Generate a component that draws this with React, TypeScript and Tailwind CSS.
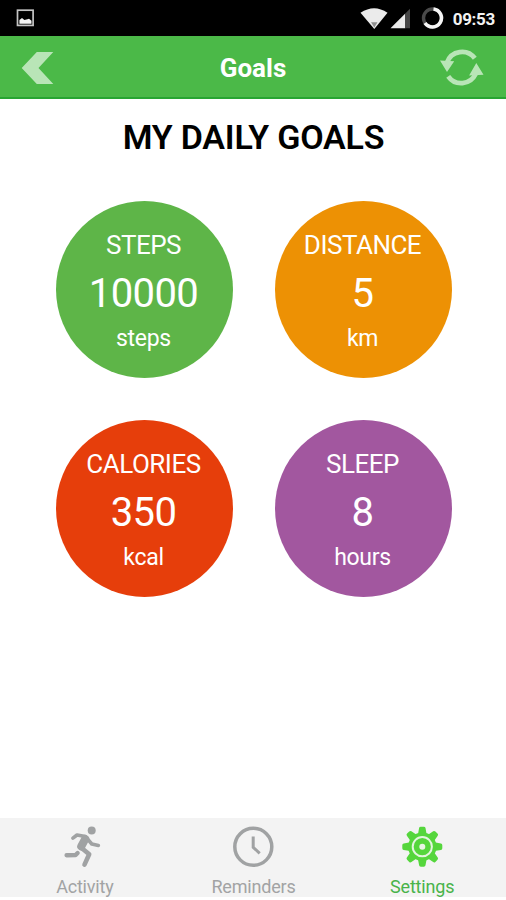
const goals = [
  { title: 'STEPS', value: '10000', unit: 'steps', color: 'bg-[#5eb548]' },
  { title: 'DISTANCE', value: '5', unit: 'km', color: 'bg-[#ed9104]' },
  { title: 'CALORIES', value: '350', unit: 'kcal', color: 'bg-[#e63e0b]' },
  { title: 'SLEEP', value: '8', unit: 'hours', color: 'bg-[#a2579f]' },
];

function StatusBar() {
  return (
    <div className="flex h-9 shrink-0 items-center justify-between bg-black pr-[11px] pl-4">
      <svg width="19" height="18" viewBox="0 0 19 18">
        <rect x="1.5" y="1.2" width="15.6" height="15.2" fill="none" stroke="#c4c4c4" strokeWidth="1.7" />
        <path d="M3.4 14.8V11l2.6-2 2.4 2 3-.8L13 9.8l2.5 2v3z" fill="#f5f5f5" />
      </svg>
      <div className="flex items-center">
        <svg width="92" height="26" viewBox="0 0 92 26" className="mr-[3px]">
          <path d="M2.5 7.7Q16.2-1.3 29.5 7.7L16.3 24z" fill="#ebebeb" />
          <path d="M13 17.2h6.5l-3.2 5.3z" fill="#8f8f8f" />
          <path d="M32.5 23.3 47.3 8.5v14.8z" fill="#ebebeb" />
          <path d="M47.3 8.5 52 3.8v19.5h-4.7z" fill="#464646" />
          <circle cx="74.5" cy="13" r="9" fill="none" stroke="#4a4a4a" strokeWidth="3.4" />
          <path d="M75.5 4A9 9 0 1 1 67 18" fill="none" stroke="#f5f5f5" strokeWidth="3.6" />
        </svg>
        <span className="pt-0.5 text-[17px] leading-6 font-bold tracking-[-0.3px] text-[#f2f2f2]">09:53</span>
      </div>
    </div>
  );
}

function Header() {
  return (
    <header className="grid h-[63px] shrink-0 grid-cols-3 items-center border-b-2 border-[#28a532] bg-[#4bb948] pr-[21px] pl-[21px]">
      <svg width="34" height="34" viewBox="0 0 34 34" className="mt-1">
        <path d="M15.8.1h16.5L17.5 16l14.8 16H15.8L.7 16z" fill="#b9e5b7" />
      </svg>
      <h1 className="pt-[3px] text-center text-[26px] leading-8 font-bold text-white">Goals</h1>
      <svg width="46" height="38" viewBox="0 0 46 38" className="mt-0.5 justify-self-end">
        <g fill="none" stroke="#b9e5b7" strokeWidth="4.8">
          <path d="M8 13.5A15.9 15.9 0 0 1 35.8 9.3" />
          <path d="M36.6 25A15.9 15.9 0 0 1 9.2 27.3" />
        </g>
        <path d="M1 11.5 15.2 12.2 8 22.9zM30.1 26.6 44.5 25.8 37.3 14z" fill="#b9e5b7" />
      </svg>
    </header>
  );
}

function RunnerIcon() {
  return (
    <svg width="40" height="42" viewBox="0 0 40 42">
      <circle cx="27.7" cy="4.6" r="4" fill="#a0a2a3" />
      <g fill="none" stroke="#a0a2a3" strokeLinecap="round" strokeLinejoin="round">
        <path d="M8.9 12.2 13 9 21.5 10.6 27.8 18 34.4 19.4" strokeWidth="3.6" />
        <path d="M21.2 13 17.2 20.5" strokeWidth="8" />
        <path d="M17 21.5 25.2 28.3 20.5 38.6" strokeWidth="4.6" />
        <path d="M13.6 27 11.6 29 2.6 29.2" strokeWidth="4.4" />
      </g>
    </svg>
  );
}

function ClockIcon() {
  return (
    <svg width="42" height="42" viewBox="0 0 42 42" fill="none" stroke="#a0a2a3">
      <circle cx="21.3" cy="20.8" r="18.5" strokeWidth="3.5" />
      <path d="M21.2 10.6v10.7l6.5 6" strokeWidth="3" />
    </svg>
  );
}

function GearIcon() {
  return (
    <svg width="42" height="42" viewBox="0 0 42 42" fill="#55d63c">
      <g transform="translate(21.3 20.7)">
        {[0, 45, 90, 135, 180, 225, 270, 315].map((angle) => (
          <path
            key={angle}
            d="M-4.4-12 -3.2-18.6Q-3-20-1.5-20H1.5Q3-20 3.2-18.6L4.4-12z"
            transform={`rotate(${angle})`}
          />
        ))}
        <circle r="14.2" />
        <circle r="9.6" fill="none" stroke="#e4f5df" strokeWidth="2" />
        <circle r="3" fill="#e9f5e6" />
      </g>
    </svg>
  );
}

export default function App() {
  return (
    <div className="flex h-[900px] w-[506px] flex-col overflow-hidden bg-white font-['Roboto','Liberation_Sans',sans-serif]">
      <StatusBar />
      <Header />
      <main className="flex flex-1 flex-col items-center">
        <h2 className="mt-[18px] pl-px text-[34px] leading-10 font-semibold tracking-[-0.2px] text-black">
          MY DAILY GOALS
        </h2>
        <div className="mt-11 grid grid-cols-2 gap-x-[42px] gap-y-[42px] pl-[2px]">
          {goals.map((goal) => (
            <section
              key={goal.title}
              className={`flex size-[177px] flex-col items-center rounded-full pt-7 pr-[2px] text-white ${goal.color}`}
            >
              <h3 className="text-[26px] leading-8 tracking-[-0.5px]">{goal.title}</h3>
              <p className="mt-[9px] text-[40px] leading-12 tracking-[-0.6px]">{goal.value}</p>
              <p className="mt-[7px] text-[23px] leading-7 tracking-[-0.3px]">{goal.unit}</p>
            </section>
          ))}
        </div>
      </main>
      <nav className="mb-[3px] grid h-[79px] shrink-0 grid-cols-3 bg-[#f3f3f3] text-[18px] leading-6 tracking-[-0.2px] text-[#a2a3a4]">
        <a className="flex flex-col items-center pt-2">
          <RunnerIcon />
          <span className="mt-[7px] pl-px">Activity</span>
        </a>
        <a className="flex flex-col items-center pt-2">
          <ClockIcon />
          <span className="mt-[7px] pl-px">Reminders</span>
        </a>
        <a className="flex flex-col items-center pt-2 text-[#48b34a]">
          <GearIcon />
          <span className="mt-[7px] pl-px">Settings</span>
        </a>
      </nav>
    </div>
  );
}
